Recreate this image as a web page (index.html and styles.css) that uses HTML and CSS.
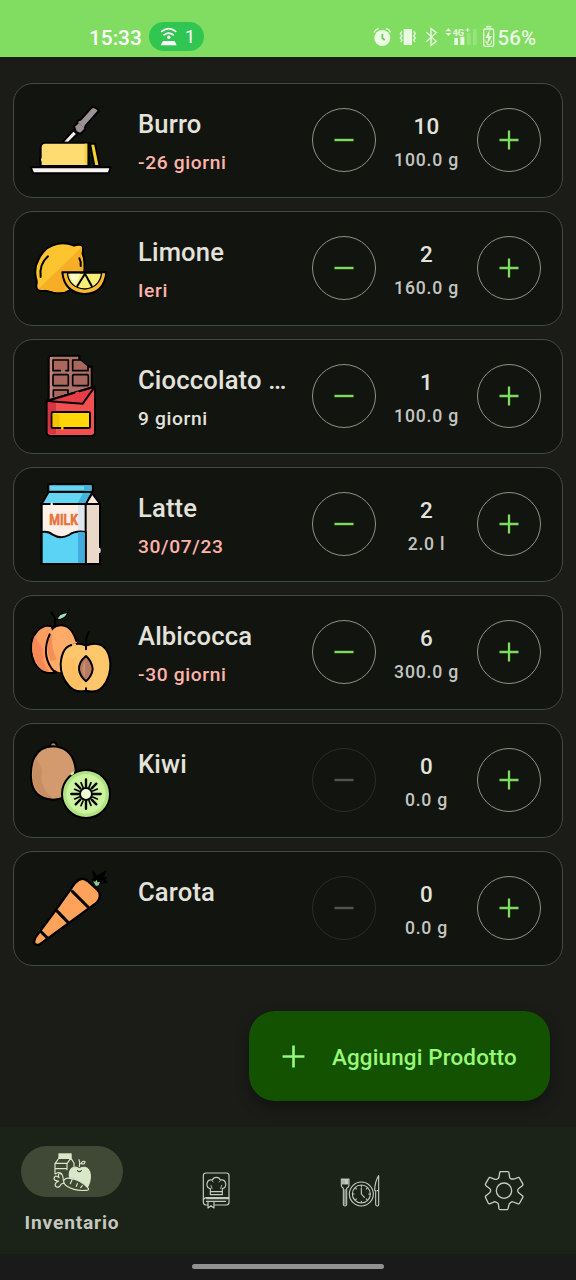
FILE: index.html
```html
<!DOCTYPE html>
<html lang="it">
<head>
<meta charset="utf-8">
<title>Inventario</title>
<link rel="stylesheet" href="styles.css">
</head>
<body>
<svg class="defs" aria-hidden="true">
  <symbol id="minus" viewBox="0 0 20 20"><path d="M.5 10h19" stroke="currentColor" stroke-width="2.4"/></symbol>
  <symbol id="plus" viewBox="0 0 20 20"><path d="M.5 10h19M10 .5v19" stroke="currentColor" stroke-width="2.3"/></symbol>
</svg>
<header class="status">
  <span class="time">15:33</span>
  <span class="hotspot">
    <svg class="hotspot-icon" viewBox="480 80 50 56" fill="none" stroke="#fff" stroke-width="5">
      <path d="M485 93q21-16 41 0M492 103q13-10 27 0" stroke-linecap="round"/>
      <circle cx="506" cy="110" r="5" fill="#fff" stroke="none"/>
      <path d="M489 121h34l6 13h-47z" fill="#fff" stroke="none"/>
    </svg>
    <span>1</span>
  </span>
  <span class="system">
    <svg class="system-icons" viewBox="90 66 390 90" fill="none" stroke="#e9fbe2" stroke-width="4">
      <circle cx="127" cy="114" r="24" fill="#e9fbe2" stroke="none"/>
      <path d="M103 96q4-8 12-10M139 86q8 2 12 10" stroke-linecap="round"/>
      <path d="M127 102v12l7 6" stroke="#6cc551" stroke-width="5"/>
      <path d="M191 87h25v48h-25z" fill="#e9fbe2" stroke="none"/>
      <path d="M186 94l-5 7 5 6-5 7 5 6-4 6M221 94l5 7-5 6 5 7-5 6 4 6"/>
      <path d="M259 97l30 27-16 12V86l16 12-30 27"/>
      <path d="M316 94l9-9 9 9zM316 99l9 9 9-9z" fill="#e9fbe2" stroke="none"/>
      <text x="338" y="107" class="net">4G</text>
      <path d="M377 90h12M383 84v12" stroke-width="3"/>
      <path d="M343 114h11v21h-11zM361 110h12v25h-12z" fill="#e9fbe2" stroke="none"/>
      <path d="M381 99h11v36h-11zM399 87h11v48h-11z" fill="#e9fbe2" opacity=".22" stroke="none"/>
      <path d="M438 80h16" stroke-width="5"/>
      <rect x="431" y="87" width="30" height="52" rx="5"/>
      <path d="M448 91l-12 23h9l-5 20 17-26h-9z" fill="#e9fbe2" stroke="none"/>
      <path d="M437 122q2 13 9 12 9 1 9-12" stroke-width="3"/>
    </svg>
    <span>56%</span>
  </span>
</header>

<main class="list">
  <article class="card">
    <svg class="food" viewBox="45 45 270 270" stroke="#000" stroke-width="6" stroke-linejoin="round" stroke-linecap="round">
      <path d="M157 187l33-36 12 11-27 27z" fill="#f1ecec"/>
      <path d="M192 139l12-11-2-5 10-4 34-38q16 1 20 12l-39 44-4 14-12 11-13-6z" fill="#9c9196"/>
      <path d="M205 128l17 16" stroke="#857a80" stroke-width="3"/>
      <path d="M92 258v-12q-5-7 0-13v-32q1-12 13-13h129v70z" fill="#ffdc72"/>
      <path d="M224 191h9v64h-9z" fill="#f6cf45" stroke="none"/>
      <path d="M236 189v67" />
      <path d="M240 191h15l14 67h-16z" fill="#f5d32c"/>
      <path d="M62 262h240l-6 18H70z" fill="#faf5f0"/>
    </svg>
    <div class="info"><h2>Burro</h2><p class="late">-26 giorni</p></div>
    <button class="step" aria-label="Meno"><svg><use href="#minus"/></svg></button>
    <div class="qty"><b>10</b><span>100.0 g</span></div>
    <button class="step" aria-label="Più"><svg><use href="#plus"/></svg></button>
  </article>

  <article class="card">
    <svg class="food" viewBox="45 39 270 270" stroke="#000" stroke-width="6" stroke-linejoin="round" stroke-linecap="round">
      <path d="M192 107q12-5 21-2 8 3 6 12l-2 13q10 22 4 45l-40 65q-22 14-50 8-16-5-25-6-29 5-27-16 3-10-1-22-7-30 8-56 18-40 58-47 24-4 48 6z" fill="#fcc42f"/>
      <path d="M215 112l-130 125q10 4 22-1 28 15 60 8l-8-54h60q5-30-6-55 4-12 2-23z" fill="#f7ad25" stroke="none"/>
      <path d="M114 139q-27 24-22 62M208 145q6 11 4 23" fill="none"/>
      <path d="M157 187h132q-6 63-65 65-61-4-67-65z" fill="#f9b92d"/>
      <path d="M172 189h103q-6 44-51 48-47-4-52-48z" fill="#f8ee76" stroke-width="4"/>
      <path d="M180 191h31l-15 33q-14-12-16-33z" fill="#fcfbca" stroke="none"/>
      <path d="M202 228l23-37 20 37" fill="none" stroke-width="6"/>
    </svg>
    <div class="info"><h2>Limone</h2><p class="late">Ieri</p></div>
    <button class="step" aria-label="Meno"><svg><use href="#minus"/></svg></button>
    <div class="qty"><b>2</b><span>160.0 g</span></div>
    <button class="step" aria-label="Più"><svg><use href="#plus"/></svg></button>
  </article>

  <article class="card">
    <svg class="food" viewBox="45 33 270 270" stroke="#000" stroke-width="6" stroke-linejoin="round" stroke-linecap="round">
      <path d="M116 180V56q0-9 9-9h84q-5 15 8 17 2 18 15 14 5 4 13 1v65l-68 40z" fill="#ad7368"/>
      <path d="M120 51h8v126h-8z" fill="#c5877d" stroke="none"/>
      <g fill="#a9675e" stroke-width="5"><path d="M168 92h7V60h-46v32h22M209 60h-21v32h46V80"/><rect x="129" y="104" width="46" height="33" rx="3"/><rect x="188" y="104" width="47" height="33" rx="3"/><path d="M130 170v-20h44v14"/></g>
      <path d="M110 183l145-44v138q0 11-12 11H123q-13 0-13-11z" fill="#f2504f"/>
      <path d="M114 188h24v95h-14q-10 0-10-9z" fill="#d93442" stroke="none"/>
      <path d="M110 183l145-44-37 53z" fill="#e83d45" stroke="none"/>
      <path d="M110 183l84-25M208 154l47-14-37 51-108-8" fill="none"/>
      <rect x="125" y="216" width="115" height="48" rx="4" fill="#ffd607"/>
      <path d="M128 221h20v39h-20z" fill="#f3c400" stroke="none"/>
      <path d="M157 261v5" stroke="#ffd607" stroke-width="7"/>
    </svg>
    <div class="info"><h2>Cioccolato …</h2><p>9 giorni</p></div>
    <button class="step" aria-label="Meno"><svg><use href="#minus"/></svg></button>
    <div class="qty"><b>1</b><span>100.0 g</span></div>
    <button class="step" aria-label="Più"><svg><use href="#plus"/></svg></button>
  </article>

  <article class="card">
    <svg class="food" viewBox="45 33 270 270" stroke="#000" stroke-width="6" stroke-linejoin="round" stroke-linecap="round">
      <path d="M95 108h132v180H95z" fill="#fdf0e9"/>
      <path d="M204 111h21v82h-21z" fill="#dfe6ed" stroke="none"/>
      <path d="M227 108h43v180h-43z" fill="#ead8c9"/>
      <path d="M247 76l23 32h-43z" fill="#fdebdc"/>
      <path d="M116 71h131l-20 37H95z" fill="#65d7f3"/>
      <path d="M220 74h22l-17 31h-22z" fill="#43b4dc" stroke="none"/>
      <rect x="115" y="49" width="133" height="22" rx="3" fill="#65d7f3"/>
      <path d="M222 52h22v16h-22z" fill="#43b4dc" stroke="none"/>
      <path d="M95 192q20-4 33 8 24 15 49 1 18-14 50-9v96H95z" fill="#5bd3f5"/>
      <path d="M204 193q10-3 20 0v92h-20z" fill="#42addd" stroke="none"/>
      <path d="M125 107v3" stroke="#fdf0e9" stroke-width="7"/>
      <path d="M268 244v7" stroke="#ead8c9" stroke-width="8"/>
      <text x="118" y="171" class="milk" stroke="#e8733d" stroke-width="1.5" textLength="86" lengthAdjust="spacingAndGlyphs">MILK</text>
    </svg>
    <div class="info"><h2>Latte</h2><p class="late">30/07/23</p></div>
    <button class="step" aria-label="Meno"><svg><use href="#minus"/></svg></button>
    <div class="qty"><b>2</b><span>2.0 l</span></div>
    <button class="step" aria-label="Più"><svg><use href="#plus"/></svg></button>
  </article>

  <article class="card">
    <svg class="food" viewBox="45 33 270 270" stroke="#000" stroke-width="6" stroke-linejoin="round" stroke-linecap="round">
      <path d="M125 91q-23-7-42 13-22 23-19 60 3 40 28 58 16 12 43 8l20-60z" fill="#ff9e61"/>
      <path d="M73 120q-18 44 10 87 12 18 34 20-24-30-18-69-13-19-26-38z" fill="#f68955" stroke="none"/>
      <path d="M126 105q9-15 29-16 34-2 47 56l-50 84q-19-1-31-25-24-50-1-88z" fill="#ffac68" stroke="none"/>
      <path d="M118 116q-13 45 4 80l18-6q-17-32-13-75z" fill="#f68e58" stroke="none"/>
      <path d="M134 92q46-18 65 43M119 115q-25 57 5 101 6 10 15 14" fill="none"/>
      <path d="M135 91V66l-11-17M135 76v-8" fill="none"/>
      <path d="M141 71q3-20 33-22-7 22-33 22z" fill="#9be0c2" stroke-width="4"/>
      <path d="M190 146q-34 3-38 58-1 37 25 66 18 22 51 14 32 9 51-13 24-29 22-70-5-53-41-57-13-2-32 5-19-9-38-3z" fill="#ffc76c"/>
      <path d="M189 147l6-2" stroke="#ffc76c" stroke-width="7"/>
      <path d="M165 188q-12 50 22 82l13 8q24-7 18-23-31-35-17-73z" fill="#ffbd60" opacity=".7" stroke="none"/>
      <path d="M228 160v-14q-1-25 9-38M228 277v10" fill="none"/>
      <path d="M228 180q-22 18-21 40 2 20 21 36 18-16 20-37-2-23-20-39z" fill="#b77b60"/>
      <path d="M225 195q-15 24 0 49z" fill="#c99175" stroke="none"/>
    </svg>
    <div class="info"><h2>Albicocca</h2><p class="late">-30 giorni</p></div>
    <button class="step" aria-label="Meno"><svg><use href="#minus"/></svg></button>
    <div class="qty"><b>6</b><span>300.0 g</span></div>
    <button class="step" aria-label="Più"><svg><use href="#plus"/></svg></button>
  </article>

  <article class="card">
    <svg class="food" viewBox="45 33 270 270" stroke="#000" stroke-width="6" stroke-linejoin="round" stroke-linecap="round">
      <path d="M120 65q1-10 10-10t11 11" fill="#b9835c"/>
      <path d="M130 67q-40 0-57 34-12 24-10 60 3 64 67 66 67-4 68-78-3-78-68-82z" fill="#d39a6e"/>
      <path d="M78 105q-12 28-9 58 6 56 58 60-42-38-30-81-5-21-19-37z" fill="#c78e64" stroke="none"/>
      <circle cx="228" cy="210" r="72" fill="#b2e383"/>
      <circle cx="228" cy="210" r="59" fill="#ccf3a0" stroke="none"/>
      <path d="M185 150l4-3" stroke="#ccf3a0" stroke-width="7"/>
      <path d="M228 166v22M228 232v22M184 210h22M250 210h22M197 179l14 14M245 227l14 14M197 241l14-14M245 193l14-14" stroke-width="7"/>
      <path d="M213 176l6 14M237 230l6 14M194 196l14 6M248 219l14 6M194 225l14-6M248 201l14-6M213 245l6-14M237 190l6-14" stroke-width="5"/>
      <circle cx="228" cy="210" r="18" fill="#f0ffd3"/>
    </svg>
    <div class="info"><h2>Kiwi</h2></div>
    <button class="step off" aria-label="Meno" disabled><svg><use href="#minus"/></svg></button>
    <div class="qty"><b>0</b><span>0.0 g</span></div>
    <button class="step" aria-label="Più"><svg><use href="#plus"/></svg></button>
  </article>

  <article class="card">
    <svg class="food" viewBox="45 39 270 270" stroke="#000" stroke-width="7" stroke-linejoin="round" stroke-linecap="round">
      <path d="M76 263l63-85 57-80q18-21 37-5l28 25q18 18-1 40L91 282q-12 7-18-3-1-8 3-16z" fill="#ffa35b"/>
      <path d="M187 124l47 47M140 182l35 36M94 246l19 19" stroke-width="9"/>
      <path d="M248 88l6-3-5-19 13 13 5-2 20-14-8 17-2 6 11-4-6 8 9 6-22 3-8 5-13-10z" fill="#000" stroke-width="4"/>
      <path d="M249 94l7 1 3-6 4 8 7-1-4 10-8 2z" fill="#91c889" stroke="none"/>
    </svg>
    <div class="info"><h2>Carota</h2></div>
    <button class="step off" aria-label="Meno" disabled><svg><use href="#minus"/></svg></button>
    <div class="qty"><b>0</b><span>0.0 g</span></div>
    <button class="step" aria-label="Più"><svg><use href="#plus"/></svg></button>
  </article>

  <button class="add"><svg><use href="#plus"/></svg><span>Aggiungi Prodotto</span></button>
</main>

<nav class="nav">
  <a class="tab active">
    <span class="pill">
      <svg viewBox="156 78 120 120" fill="none" stroke="#d8e8c8" stroke-width="3.5" stroke-linejoin="round" stroke-linecap="round">
        <path d="M177 83h37v13h-37z" fill="#d8e8c8" stroke-width="2"/>
        <path d="M177 96l-12 17v31M165 112h37M178 97h34l-11 16v18M213 97l9 14v10M166 128h34M168 143q10-8 16 2"/>
        <path d="M238 128q-14-10-24 0-9 10-5 26 16 1 30 10 17 7 24 18 9-15 8-35-2-19-16-23-8-1-17 4z" fill="#d8e8c8"/>
        <path d="M232 134q6 6 12 0" stroke="#3f4936"/>
        <path d="M238 122q3-12-1-21M243 113q2-9 12-6 1 9-12 6z"/>
        <path d="M191 164q5-10 19-7 32 3 55 30 3 6-7 6-34 3-57-12-12-9-10-17z" fill="#3f4936"/>
        <path d="M190 163q-1-18-8-22-10 1-5 14-12-10-15 2 1 8 14 8-13 6-10 15 9 10 18-6 6-2 9-3M217 159l-6 14M232 173l-3 8M247 179l-5 6"/>
      </svg>
    </span>
    <span class="label">Inventario</span>
  </a>
  <a class="tab">
    <svg viewBox="588 137 120 120" fill="none" stroke="#c5cbbd" stroke-width="3.5" stroke-linejoin="round" stroke-linecap="round">
      <path d="M623 239h-5q-8-1-8-9v-79q0-8 8-8h61q8 0 8 8v80q0 8-8 8h-35"/>
      <path d="M610 224q2-7 9-7h67M686 220h-66M619 228h58M624 229v19l9-7 9 7v-19"/>
      <path d="M631 190q-12-3-10-16 3-13 16-10 3-8 12-8t12 8q13-3 16 10 2 13-10 16v18h-36zM631 199h36"/>
      <path d="M633 180l3 10M665 180l-3 10M640 170q-2-3-4-4M657 170q2-3 4-4" stroke-width="2.5"/>
    </svg>
  </a>
  <a class="tab">
    <svg viewBox="300 512 120 120" fill="none" stroke="#c5cbbd" stroke-width="3.3" stroke-linejoin="round" stroke-linecap="round">
      <path d="M304 536v19q1 6 6 9v49q1 4 5 4t5-4v-49q6-3 7-9v-19h-4v15h-3v-15h-3v15h-3v-15h-4v15h-2v-15zM315 568v44"/>
      <circle cx="364" cy="581" r="36"/><circle cx="364" cy="581" r="27"/>
      <path d="M364 563v18l9 10M364 556v3M364 603v3M339 581h3M386 581h3M347 564l2 2M381 564l-2 2M347 598l2-2M381 598l-2-2"/>
      <path d="M416 526q-11 17-12 43l3 3v41q1 4 5 4 4-1 4-4zM411 571h4"/>
    </svg>
  </a>
  <a class="tab">
    <svg viewBox="732 512 120 120" fill="none" stroke="#c5cbbd" stroke-width="4" stroke-linejoin="round">
      <circle cx="792" cy="571" r="23"/>
      <path d="M780 514h24q2 0 3 4l2 13q1 4 5 5l9 0 10-4q4-2 6 2l9 16q2 3-1 6l-10 8q-4 3-4 7t4 7l10 8q3 2 1 6l-9 16q-2 4-6 2l-13-5q-4-2-7 1l-5 4-4 15q-1 3-3 3h-20q-3 0-4-3l-2-14q-1-3-4-4l-7-3-13 6q-3 2-6-1l-8-17q-2-4 1-6l10-8q4-3 4-7t-4-7l-10-8q-3-3-1-6l9-16q2-4 6-2l13 5q4 1 7-1 4-2 5-6l2-12q1-4 3-4z"/>
    </svg>
  </a>
</nav>
<footer class="gesture"><span></span></footer>
</body>
</html>
```
FILE: styles.css
```css
* { box-sizing: border-box; }
body {
  margin: 0;
  width: 576px;
  height: 1280px;
  display: flex;
  flex-direction: column;
  overflow: hidden;
  background: #1b1c18;
  color: #e3e3dc;
  font-family: Roboto, "Noto Sans", sans-serif;
  font-weight: 500;
}
h2, p { margin: 0; font-weight: 500; }
button { padding: 0; background: none; font: inherit; }
.defs { display: none; }

.status {
  height: 57px;
  flex: none;
  display: flex;
  align-items: flex-start;
  padding: 22px 40px 0 89px;
  background: #81dd61;
  color: #fff;
  line-height: 32px;
}
.time { font-size: 20.8px; width: 60px; }
.hotspot {
  display: flex;
  align-items: center;
  gap: 8px;
  width: 55px;
  height: 29px;
  padding-left: 11px;
  border-radius: 15px;
  background: #31c651;
  font-size: 18px;
  font-weight: 400;
}
.hotspot-icon { width: 17px; height: 19px; }
.system {
  display: flex;
  margin-left: auto;
  color: #e9fbe2;
  font-size: 20.5px;
}
.system-icons { width: 130px; height: 30px; margin-right: -2px; }
.net { font-size: 27px; font-weight: 700; fill: #e9fbe2; stroke: none; }

.list {
  flex: 1;
  display: flex;
  flex-direction: column;
  gap: 13px;
  padding: 26px 13px 0;
}
.card {
  display: flex;
  align-items: center;
  height: 115px;
  flex: none;
  padding: 0 21px 2px 11px;
  border: 1px solid #454843;
  border-radius: 20px;
  background: #12140f;
}
.food { width: 90px; height: 90px; flex: none; }
.milk { font-size: 43px; font-weight: 700; fill: #e8733d; }
.info {
  align-self: stretch;
  width: 174px;
  margin-left: 23px;
  padding-top: 21px;
  white-space: nowrap;
}
.info h2 { font-size: 25.6px; line-height: 39px; letter-spacing: .16px; }
.info p { font-size: 19.2px; line-height: 38px; letter-spacing: .64px; }
.info .late { color: #ffb4ab; }
.step {
  width: 64px;
  height: 64px;
  flex: none;
  display: grid;
  place-items: center;
  border: 1.5px solid #8d9286;
  border-radius: 50%;
  color: #7edb5f;
}
.step svg { width: 20px; height: 20px; }
.step.off { border-color: #2a2c27; color: #52544e; }
.qty {
  align-self: stretch;
  flex: 1;
  display: flex;
  flex-direction: column;
  align-items: center;
  padding-top: 26px;
  white-space: nowrap;
}
.qty b { font-size: 22.4px; font-weight: 500; line-height: 32px; letter-spacing: .16px; }
.qty span { font-size: 17.6px; line-height: 37px; letter-spacing: .8px; color: #c4c6c1; }

.add {
  align-self: flex-end;
  display: flex;
  align-items: center;
  width: 301px;
  height: 90px;
  margin: 32px 13px 0 0;
  padding-left: 33px;
  gap: 27px;
  border: 0;
  border-radius: 26px;
  background: #125200;
  color: #98f878;
  font-size: 22.4px;
  letter-spacing: .16px;
  line-height: 30px;
  white-space: nowrap;
  box-shadow: 0 6px 14px rgba(0, 0, 0, .35);
}
.add svg { width: 23px; height: 23px; }
.add span { padding-top: 1px; }

.nav {
  flex: none;
  height: 127px;
  display: grid;
  grid-template-columns: repeat(4, 1fr);
  background: #1b2319;
}
.tab { display: flex; flex-direction: column; align-items: center; justify-content: center; }
.tab svg { width: 40px; height: 40px; }
.active { justify-content: flex-start; padding-top: 19px; }
.pill {
  display: grid;
  place-items: center;
  width: 102px;
  height: 51px;
  border-radius: 26px;
  background: #3f4936;
}
.label {
  margin-top: 11px;
  font-size: 19.2px;
  font-weight: 700;
  line-height: 30px;
  letter-spacing: .8px;
  color: #c4c8bf;
}
.gesture {
  flex: none;
  height: 26px;
  display: flex;
  justify-content: center;
  padding-top: 10px;
  background: #1a1a1a;
}
.gesture span { width: 192px; height: 5px; border-radius: 3px; background: #919191; }
```
